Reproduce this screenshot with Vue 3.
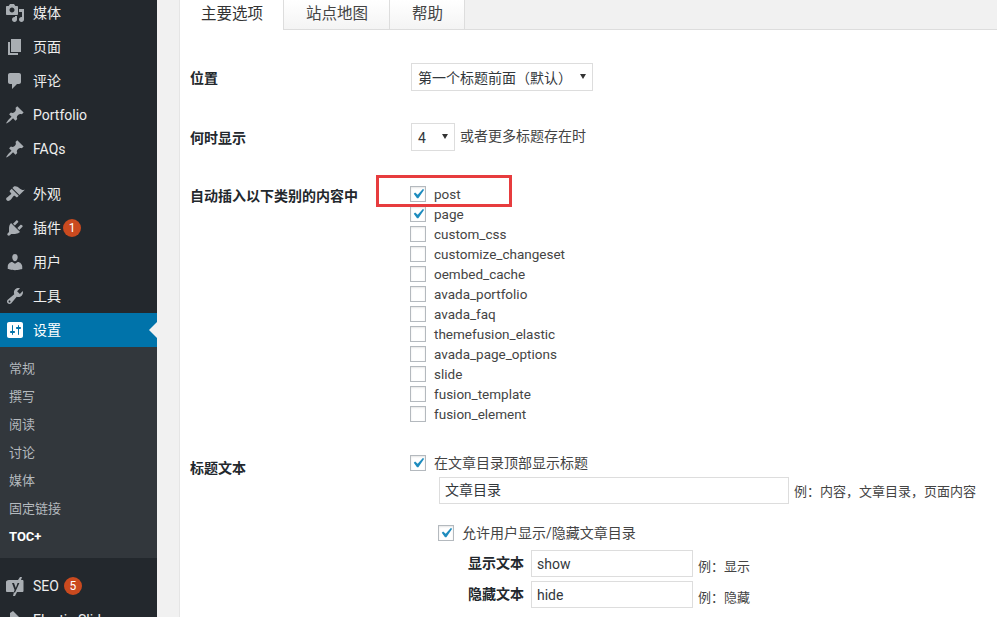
<script setup>
const icons = {
  media: 'M13 11V4c0-.55-.45-1-1-1h-1.67L9 1H5L3.67 3H2c-.55 0-1 .45-1 1v7c0 .55.45 1 1 1h10c.55 0 1-.45 1-1zM7 4.5c1.38 0 2.5 1.12 2.5 2.5S8.38 9.5 7 9.5 4.5 8.38 4.5 7 5.62 4.5 7 4.5zM14 6h5v10.5c0 1.38-1.12 2.5-2.5 2.5S14 17.88 14 16.5s1.12-2.5 2.5-2.5c.17 0 .34.02.5.05V9h-3V6zm-4 8.05V13h2v3.5c0 1.38-1.12 2.5-2.5 2.5S7 17.88 7 16.5 8.12 14 9.5 14c.17 0 .34.02.5.05z',
  page: 'M6 15V2h10v13H6zm-1 1h8v2H3V5h2v11z',
  comment: 'M5 2h9c1.1 0 2 .9 2 2v7c0 1.1-.9 2-2 2h-2l-5 5v-5H5c-1.1 0-2-.9-2-2V4c0-1.1.9-2 2-2z',
  pin: 'M10.44 3.02l1.82-1.82 6.36 6.35-1.83 1.82c-1.05-.68-2.48-.57-3.41.36l-.75.75c-.92.93-1.04 2.35-.35 3.41l-1.83 1.82-2.41-2.41-2.8 2.79c-.42.42-3.38 2.71-3.8 2.29s1.86-3.39 2.28-3.81l2.79-2.79L4.1 9.36l1.83-1.82c1.05.69 2.48.57 3.4-.36l.75-.75c.93-.92 1.05-2.35.36-3.41z',
  brush: 'M14.48 11.06L7.41 3.99l1.5-1.5c.5-.56 2.3-.47 3.51.32 1.21.8 1.43 1.28 2.91 2.1 1.18.64 2.45 1.26 4.45.85zm-.71.71L6.7 4.7 4.93 6.47c-.39.39-.39 1.02 0 1.41l1.06 1.06c.39.39.39 1.03 0 1.42-.6.6-1.43 1.11-2.21 1.69-.35.26-.7.53-1.01.84C1.43 13.23.4 14.98 1.71 16.29c1.3 1.3 3.05.28 4.39-1.07.31-.31.58-.66.84-1.01.58-.78 1.09-1.61 1.69-2.21.39-.39 1.03-.39 1.42 0l1.06 1.06c.39.39 1.02.39 1.41 0z',
  plugin: 'M13.11 4.36L9.87 7.6 8 5.73l3.24-3.24c.35-.34 1.05-.2 1.56.32.52.51.66 1.21.31 1.55zm-8 1.77l.91-1.12 9.01 9.01-1.19.84c-.71.71-2.63 1.16-3.82 1.16H6.14L4.9 17.26c-.59.59-1.54.59-2.12 0-.59-.58-.59-1.53 0-2.12l1.24-1.24v-3.88c0-1.13.4-3.19 1.09-3.89zm7.26 3.97l3.24-3.24c.34-.35 1.04-.21 1.55.31.52.51.66 1.21.31 1.55l-3.24 3.25z',
  user: 'M10 9.25c-2.27 0-2.73-3.44-2.73-3.44C7 4.02 7.82 2 9.97 2c2.16 0 2.98 2.02 2.71 3.81 0 0-.41 3.44-2.68 3.44zm0 2.57L12.72 10c2.39 0 4.52 2.33 4.52 4.53v2.49s-3.65 1.13-7.24 1.13c-3.65 0-7.24-1.13-7.24-1.13v-2.49c0-2.25 1.94-4.48 4.47-4.48z',
  tool: 'M16.68 9.77c-1.34 1.34-3.3 1.67-4.95.99l-5.41 6.52c-.99.99-2.59.99-3.58 0s-.99-2.59 0-3.57l6.52-5.42c-.68-1.65-.35-3.61.99-4.95 1.28-1.28 3.12-1.62 4.72-1.06l-2.89 2.89 2.82 2.82 2.86-2.87c.53 1.58.18 3.39-1.08 4.65zM3.81 16.21c.4.39 1.04.39 1.43 0 .4-.4.4-1.04 0-1.43-.39-.4-1.03-.4-1.43 0-.39.39-.39 1.03 0 1.43z',
  settings: 'M18 16V4c0-1.1-.9-2-2-2H4c-1.1 0-2 .9-2 2v12c0 1.1.9 2 2 2h12c1.1 0 2-.9 2-2zM8 11h1c.55 0 1 .45 1 1s-.45 1-1 1H8v1.5c0 .28-.22.5-.5.5s-.5-.22-.5-.5V13H6c-.55 0-1-.45-1-1s.45-1 1-1h1V5.5c0-.28.22-.5.5-.5s.5.22.5.5V11zm5-2h-1c-.55 0-1-.45-1-1s.45-1 1-1h1V5.5c0-.28.22-.5.5-.5s.5.22.5.5V7h1c.55 0 1 .45 1 1s-.45 1-1 1h-1v5.5c0 .28-.22.5-.5.5s-.5-.22-.5-.5V9z',
  seo: 'M4 4h9l2-3h2l-1 3h1.5c.5 0 1 .5 1 1v10c0 .5-.5 1-1 1H12l-2 4H8l1-4H2c-.5 0-1-.5-1-1V6c0-1 1-2 3-2zm3 3l2.6 7-1 2.5h1.4l4.4-9.5h-1.8l-1.8 5-1.8-5z',
  slider: 'M8 1l9 9-7 8H6l-1-3V3z'
}
const check = 'M14.83 4.89l1.34.94-5.81 8.38H9.02L5.78 9.67l1.34-1.25 2.57 2.4z'
const groupA = [
  { label: '媒体', icon: 'media' },
  { label: '页面', icon: 'page' },
  { label: '评论', icon: 'comment' },
  { label: 'Portfolio', icon: 'pin' },
  { label: 'FAQs', icon: 'pin' }
]
const groupB = [
  { label: '外观', icon: 'brush' },
  { label: '插件', icon: 'plugin', badge: '1' },
  { label: '用户', icon: 'user' },
  { label: '工具', icon: 'tool' }
]
const groupC = [
  { label: 'SEO', icon: 'seo', badge: '5' },
  { label: 'Elastic Slider', icon: 'slider' }
]
const submenu = ['常规', '撰写', '阅读', '讨论', '媒体', '固定链接']
const tabs = ['主要选项', '站点地图', '帮助']
const types = [
  { name: 'post', on: true },
  { name: 'page', on: true },
  { name: 'custom_css' },
  { name: 'customize_changeset' },
  { name: 'oembed_cache' },
  { name: 'avada_portfolio' },
  { name: 'avada_faq' },
  { name: 'themefusion_elastic' },
  { name: 'avada_page_options' },
  { name: 'slide' },
  { name: 'fusion_template' },
  { name: 'fusion_element' }
]
</script>

<template>
  <div class="page">
    <aside class="side">
      <ul class="menu first">
        <li v-for="m in groupA" :key="m.label" class="item">
          <svg class="ico" viewBox="0 0 20 20"><path :d="icons[m.icon]" /></svg>
          <span>{{ m.label }}</span>
        </li>
      </ul>
      <ul class="menu">
        <li v-for="m in groupB" :key="m.label" class="item">
          <svg class="ico" viewBox="0 0 20 20"><path :d="icons[m.icon]" /></svg>
          <span>{{ m.label }}</span>
          <b v-if="m.badge" class="badge tight">{{ m.badge }}</b>
        </li>
        <li class="item current">
          <svg class="ico" viewBox="0 0 20 20"><path fill-rule="evenodd" :d="icons.settings" /></svg>
          <span>设置</span>
          <i class="pointer"></i>
        </li>
      </ul>
      <ul class="sub">
        <li v-for="s in submenu" :key="s">{{ s }}</li>
        <li class="strong">TOC+</li>
      </ul>
      <ul class="menu">
        <li v-for="m in groupC" :key="m.label" class="item">
          <svg class="ico" viewBox="0 0 20 20"><path fill-rule="evenodd" :d="icons[m.icon]" /></svg>
          <span>{{ m.label }}</span>
          <b v-if="m.badge" class="badge">{{ m.badge }}</b>
        </li>
      </ul>
    </aside>

    <main class="main">
      <nav class="tabs">
        <a v-for="(t, i) in tabs" :key="t" class="tab" :class="{ active: i === 0 }">{{ t }}</a>
      </nav>

      <section class="form">
        <div class="row">
          <label class="lab">位置</label>
          <div class="line">
            <div class="sel wide">第一个标题前面（默认）<i class="tri"></i></div>
          </div>
        </div>

        <div class="row second">
          <label class="lab">何时显示</label>
          <div class="line">
            <div class="sel narrow">4<i class="tri"></i></div>
            <span class="note up">或者更多标题存在时</span>
          </div>
        </div>

        <div class="row third">
          <label class="lab small">自动插入以下类别的内容中</label>
          <div class="checks">
            <div v-for="t in types" :key="t.name" class="check">
              <span class="box" :class="{ on: t.on }">
                <svg v-if="t.on" viewBox="0 0 20 20"><path :d="check" /></svg>
              </span>
              <span>{{ t.name }}</span>
            </div>
            <div class="redbox"></div>
          </div>
        </div>

        <div class="row">
          <label class="lab">标题文本</label>
          <div>
            <div class="check">
              <span class="box on"><svg viewBox="0 0 20 20"><path :d="check" /></svg></span>
              <span>在文章目录顶部显示标题</span>
            </div>
            <div class="indent">
              <div class="line title-line">
                <div class="inp big">文章目录</div>
                <span class="note small-note">例：内容，文章目录，页面内容</span>
              </div>
              <div class="check allow">
                <span class="box on"><svg viewBox="0 0 20 20"><path :d="check" /></svg></span>
                <span>允许用户显示/隐藏文章目录</span>
              </div>
              <div class="pair first-pair">
                <b class="pair-lab">显示文本</b>
                <div class="inp mid">show</div>
                <span class="note small-note">例：显示</span>
              </div>
              <div class="pair">
                <b class="pair-lab">隐藏文本</b>
                <div class="inp mid">hide</div>
                <span class="note small-note">例：隐藏</span>
              </div>
            </div>
          </div>
        </div>
      </section>
    </main>
  </div>
</template>

<style>
html, body { margin: 0; background: #f1f1f1; overflow: hidden; }
</style>

<style scoped>
.page {
  display: flex;
  height: 617px;
  overflow: hidden;
  font-family: Roboto, "Noto Sans CJK SC", sans-serif;
  font-size: 14px;
  color: #444;
  background: #f1f1f1;
}
ul { list-style: none; margin: 0; padding: 0; }

/* sidebar */
.side { width: 157px; flex: none; background: #23282d; color: #eee; }
.menu { margin-top: 11px; }
.menu.first { margin-top: -4px; }
.item { position: relative; display: flex; align-items: center; height: 34px; line-height: 34px; }
.ico { width: 20px; height: 20px; margin-left: 5px; margin-right: 8px; fill: #a9aeb3; flex: none; }
.current { background: #0073aa; color: #fff; }
.current .ico { fill: #fff; }
.pointer {
  position: absolute; right: 0; top: 9px;
  border: 8px solid transparent; border-left: 0; border-right-color: #f1f1f1;
}
.badge {
  width: 18px; height: 18px; margin-left: 5px; border-radius: 50%;
  background: #ca4a1f; color: #fff; font-size: 12px; font-weight: 400;
  line-height: 18px; text-align: center;
}
.badge.tight { margin-left: 2px; }
.sub { padding: 7px 0 8px; background: #32373c; color: #b4b9be; font-size: 13px; }
.sub li { height: 27px; line-height: 28px; padding: 1px 0 0 9px; }
.sub .strong { color: #fff; font-weight: 700; }

/* main */
.main { flex: 1; min-width: 0; background: #fff; border-left: 1px solid #e5e5e5; margin-left: 22px; }
.tabs { display: flex; height: 29px; background: #f1f1f1; border-bottom: 1px solid #ddd; margin-bottom: -1px; }
.tab {
  display: block; height: 29px; line-height: 29px; padding: 0 21px 0 22px; font-size: 15.5px; color: #444;
  background: linear-gradient(#fff, #f4f4f4);
  border-right: 1px solid #ddd;
}
.tab.active { background: #fff; height: 30px; color: #333; padding: 0 20px 0 21px; }

.form { padding: 34px 0 0 10px; }
.row { display: grid; grid-template-columns: 221px 1fr; margin-bottom: 32px; }
.row.second { margin-bottom: 33px; }
.row.third { margin-bottom: 29px; }
.lab { font-weight: 700; color: #23282d; line-height: 20px; padding-top: 5px; }
.lab.small { padding-top: 2px; }
.line { display: flex; align-items: center; }
.sel {
  position: relative; box-sizing: border-box; height: 28px; line-height: 29px;
  border: 1px solid #ddd; padding-left: 6px; color: #32373c; background: #fff;
}
.sel.wide { width: 182px; }
.sel.narrow { width: 44px; }
.tri {
  position: absolute; right: 6px; top: 10px; width: 0; height: 0;
  border-style: solid; border-width: 5px 3px 0; border-color: #333 transparent transparent;
}
.note { margin-left: 5px; color: #444; }
.note.up { position: relative; top: -2px; }
.small-note { font-size: 13px; }

.checks { position: relative; font-size: 13.5px; }
.check { display: flex; align-items: center; height: 20px; line-height: 20px; }
.box {
  box-sizing: border-box; width: 16px; height: 16px; margin-right: 8px; flex: none;
  border: 1px solid #b4b9be; background: #fff; box-shadow: inset 0 1px 2px rgba(0,0,0,.1);
  margin-left: -1px; position: relative;
}
.box svg { position: absolute; left: -3px; top: -3px; width: 20px; height: 20px; fill: #1e8cbe; }
.redbox {
  position: absolute; left: -35px; top: -9px; width: 130px; height: 26px;
  border: 3px solid #e73c3e;
}

.indent { padding-left: 28px; padding-top: 4px; }
.inp {
  box-sizing: border-box; height: 27px; line-height: 25px; border: 1px solid #ddd;
  padding-left: 5px; color: #32373c; background: #fff;
}
.inp.big { width: 350px; }
.inp.mid { width: 162px; line-height: 27px; }
.allow { margin-top: 19px; margin-bottom: 7px; }
.pair { display: flex; align-items: center; padding-left: 29px; margin-top: 4px; }
.first-pair { margin-top: 0; }
.pair-lab { width: 63px; flex: none; color: #23282d; position: relative; top: -2px; }
.pair .note { position: relative; top: 2px; }
</style>
